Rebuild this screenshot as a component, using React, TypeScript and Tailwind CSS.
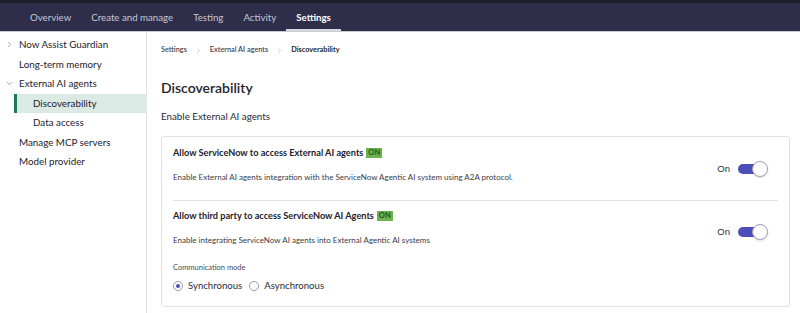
import { ChevronDown, ChevronRight } from "lucide-react";

const tabs = ["Overview", "Create and manage", "Testing", "Activity", "Settings"];

function Toggle() {
  return (
    <div className="flex items-center gap-[8px]">
      <span className="text-[9.5px] leading-[12px] text-[#2b2b33] font-['Liberation_Sans',sans-serif]">On</span>
      <div className="relative w-[30px] h-[16px] flex items-center">
        <div className="w-[26px] h-[10px] rounded-full bg-[#4c4fb9]" />
        <div className="absolute right-0 top-0 w-[16px] h-[16px] rounded-full bg-white border border-[#a0a0b2] shadow-sm" />
      </div>
    </div>
  );
}

function Badge() {
  return (
    <span className="ml-[3px] inline-block px-[2px] text-[7.5px] leading-[10px] font-bold bg-[#6db150] text-[#2a5619]">ON</span>
  );
}

function Section({
  title,
  desc,
  children,
}: {
  title: string;
  desc: string;
  children?: React.ReactNode;
}) {
  return (
    <div className="flex">
      <div className="flex-1">
        <div className="flex items-center text-[9.2px] font-bold text-[#22222b] h-[14px]">
          {title}
          <Badge />
        </div>
        <div className="mt-[11px] text-[8px] text-[#3b3b44] leading-[12px]">{desc}</div>
        {children}
      </div>
      <div className="pt-[15px] pr-[10px]">
        <Toggle />
      </div>
    </div>
  );
}

function Radio({ label, checked }: { label: string; checked?: boolean }) {
  return (
    <label className="flex items-center gap-[5px]">
      <span className="w-[10px] h-[10px] rounded-full border border-[#9a9aa6] flex items-center justify-center bg-white">
        {checked && <span className="w-[4px] h-[4px] rounded-full bg-[#4c4fb9]" />}
      </span>
      <span className="text-[9.6px] leading-[14px] text-[#2b2b33]">{label}</span>
    </label>
  );
}

export default function App() {
  const items = [
    { label: "Now Assist Guardian", icon: "right", indent: 0 },
    { label: "Long-term memory", indent: 0 },
    { label: "External AI agents", icon: "down", indent: 0 },
    { label: "Discoverability", indent: 1, active: true },
    { label: "Data access", indent: 1 },
    { label: "Manage MCP servers", indent: 0 },
    { label: "Model provider", indent: 0 },
  ];

  return (
    <div className="w-[800px] h-[313px] bg-white overflow-hidden font-['Lato',sans-serif] flex flex-col">
      <div className="h-[3px] bg-[#1d1c29]" />
      <div className="h-[28px] bg-[#2f2e4a] flex items-stretch pl-[20px] border-b border-[#c9c9cf] box-content">
        {tabs.map((t) => (
          <div
            key={t}
            className={
              t === "Settings"
                ? "px-[10px] flex items-center text-[9.7px] font-bold text-white border-b-[2px] border-[#d6d6de] pt-[2px]"
                : "px-[10px] flex items-center text-[9.7px] text-[#c6c6d2] border-b-[2px] border-transparent pt-[2px]"
            }
          >
            {t}
          </div>
        ))}
      </div>
      <div className="flex flex-1">
        <div className="w-[147px] border-r border-[#e2e2e6] pt-[3px]">
          {items.map((it) => (
            <div
              key={it.label}
              className={
                it.active
                  ? "h-[19.5px] flex items-center ml-[14px] border-l-[3px] border-[#1d7a58] bg-[#dbeae4] pl-[16px] text-[9.8px] text-[#22222b]"
                  : it.indent
                  ? "h-[19.5px] flex items-center pl-[33px] text-[9.8px] text-[#22222b]"
                  : "h-[19.5px] flex items-center pl-[5px] text-[9.8px] text-[#22222b]"
              }
            >
              {!it.indent && (
                <span className="w-[14px] flex items-center text-[#6a6a74]">
                  {it.icon === "right" && <ChevronRight size={9} strokeWidth={1.5} />}
                  {it.icon === "down" && <ChevronDown size={9} strokeWidth={1.5} />}
                </span>
              )}
              {it.label}
            </div>
          ))}
        </div>
        <div className="flex-1 pl-[14px] pr-[10px]">
          <div className="mt-[13px] h-[10px] leading-[10px] flex items-center gap-[8px] text-[7.3px] font-semibold text-[#45454f]">
            <span>Settings</span>
            <ChevronRight size={7} strokeWidth={1.5} className="text-[#8a8a94]" />
            <span>External AI agents</span>
            <ChevronRight size={7} strokeWidth={1.5} className="text-[#8a8a94]" />
            <span className="font-bold text-[#1f1f28]">Discoverability</span>
          </div>
          <h1 className="mt-[23px] text-[14px] font-semibold text-[#24242d] leading-[20px]">Discoverability</h1>
          <div className="mt-[11px] text-[9.8px] leading-[14px] text-[#2b2b33]">Enable External AI agents</div>
          <div className="mt-[13px] border border-[#e2e2e6] rounded-[3px] px-[11px] pt-[9px] pb-[13px]">
            <div className="pb-[17px] border-b border-[#e3e3e8]">
              <Section
                title="Allow ServiceNow to access External AI agents"
                desc="Enable External AI agents integration with the ServiceNow Agentic AI system using A2A protocol."
              />
            </div>
            <div className="pt-[8px]">
              <Section
                title="Allow third party to access ServiceNow AI Agents"
                desc="Enable integrating ServiceNow AI agents into External Agentic AI systems"
              >
                <div className="mt-[17px] text-[7.5px] leading-[10px] text-[#4a4a54]">Communication mode</div>
                <div className="mt-[6px] flex items-center gap-[7px]">
                  <Radio label="Synchronous" checked />
                  <Radio label="Asynchronous" />
                </div>
              </Section>
            </div>
          </div>
        </div>
      </div>
    </div>
  );
}
